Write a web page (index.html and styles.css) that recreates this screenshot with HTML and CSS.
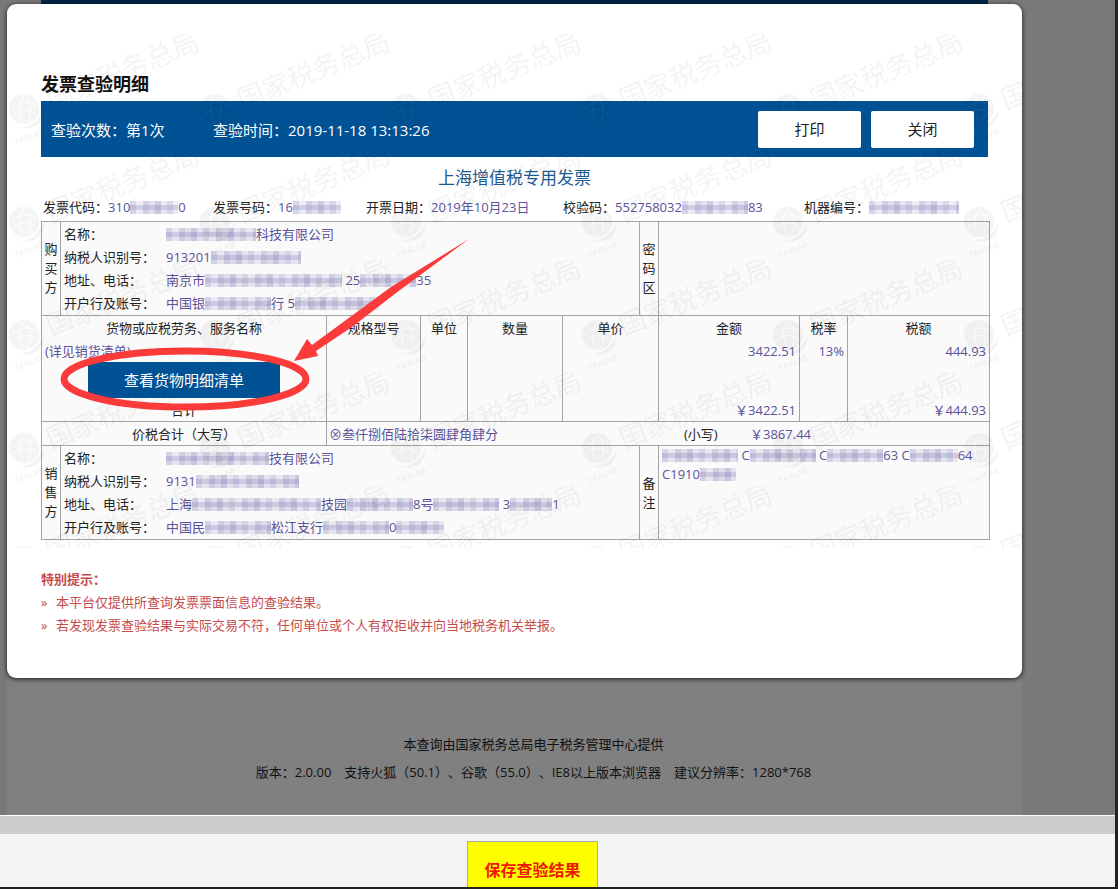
FILE: index.html
```html
<!DOCTYPE html>
<html lang="zh-CN">
<head>
  <meta charset="UTF-8">
  <meta name="viewport" content="width=device-width, initial-scale=1.0">
  <title>发票查验明细</title>
  <link rel="stylesheet" href="styles.css">
</head>
<body>

  <main class="backdrop">
    <div class="banner"></div>

    <section class="dialog">
      <h1>发票查验明细</h1>

      <!-- Check info and actions -->
      <div class="check-bar">
        <span class="check-count">查验次数：第1次</span>
        <span class="check-time">查验时间：2019-11-18 13:13:26</span>
        <button type="button" class="bar-button">打印</button>
        <button type="button" class="bar-button">关闭</button>
      </div>

      <h2>上海增值税专用发票</h2>

      <div class="invoice-info">
        <div>发票代码：<span class="value">310<i class="mosaic m48"></i>0</span></div>
        <div>发票号码：<span class="value">16<i class="mosaic m48"></i></span></div>
        <div>开票日期：<span class="value">2019年10月23日</span></div>
        <div>校验码：<span class="value">552758032<i class="mosaic m66"></i>83</span></div>
        <div>机器编号：<span class="value"><i class="mosaic m90"></i></span></div>
      </div>

      <!-- Invoice -->
      <table class="invoice">
        <colgroup>
          <col class="c-side">
          <col class="c-name">
          <col class="c-spec">
          <col class="c-unit">
          <col class="c-count">
          <col class="c-price">
          <col class="c-side">
          <col class="c-amount">
          <col class="c-rate">
          <col class="c-tax">
        </colgroup>
        <tbody>
          <tr class="party-row">
            <th class="side">购买方</th>
            <td colspan="5">
              <dl class="party">
                <dt>名称：</dt>
                <dd><i class="mosaic m90"></i>科技有限公司</dd>
                <dt>纳税人识别号：</dt>
                <dd>913201<i class="mosaic m90"></i></dd>
                <dt>地址、电话：</dt>
                <dd>南京市<i class="mosaic m137"></i> 25<i class="mosaic m56"></i>35</dd>
                <dt>开户行及账号：</dt>
                <dd>中国银<i class="mosaic m66"></i>行 5<i class="mosaic m84"></i></dd>
              </dl>
            </td>
            <th class="side">密码区</th>
            <td colspan="3"></td>
          </tr>
          <tr class="goods-head">
            <th colspan="2">货物或应税劳务、服务名称</th>
            <th>规格型号</th>
            <th>单位</th>
            <th>数量</th>
            <th colspan="2">单价</th>
            <th>金额</th>
            <th>税率</th>
            <th>税额</th>
          </tr>
          <tr class="goods-item">
            <td colspan="2" class="item-name">(详见销货清单)</td>
            <td></td>
            <td></td>
            <td></td>
            <td colspan="2"></td>
            <td class="number">3422.51</td>
            <td class="number">13%</td>
            <td class="number">444.93</td>
          </tr>
          <tr class="goods-action">
            <td colspan="2"><button type="button" class="list-button">查看货物明细清单</button></td>
            <td></td>
            <td></td>
            <td></td>
            <td colspan="2"></td>
            <td></td>
            <td></td>
            <td></td>
          </tr>
          <tr class="goods-sum">
            <th colspan="2">合计</th>
            <td></td>
            <td></td>
            <td></td>
            <td colspan="2"></td>
            <td class="number">￥3422.51</td>
            <td></td>
            <td class="number">￥444.93</td>
          </tr>
          <tr class="total-row">
            <th colspan="2">价税合计（大写）</th>
            <td colspan="8">
              <div class="total">
                <span class="total-words">⊗叁仟捌佰陆拾柒圆肆角肆分</span>
                <span class="total-label">(小写)</span>
                <span>￥3867.44</span>
              </div>
            </td>
          </tr>
          <tr class="party-row">
            <th class="side">销售方</th>
            <td colspan="5">
              <dl class="party">
                <dt>名称：</dt>
                <dd><i class="mosaic m103"></i>技有限公司</dd>
                <dt>纳税人识别号：</dt>
                <dd>9131<i class="mosaic m103"></i></dd>
                <dt>地址、电话：</dt>
                <dd>上海<i class="mosaic m129"></i>技园<i class="mosaic m66"></i>8号<i class="mosaic m66"></i> 3<i class="mosaic m42"></i>1</dd>
                <dt>开户行及账号：</dt>
                <dd>中国民<i class="mosaic m66"></i>松江支行<i class="mosaic m66"></i>0<i class="mosaic m48"></i></dd>
              </dl>
            </td>
            <th class="side">备注</th>
            <td colspan="3" class="remark">
              <i class="mosaic m76"></i> C<i class="mosaic m66"></i> C<i class="mosaic m56"></i>63 C<i class="mosaic m48"></i>64<br>
              C1910<i class="mosaic m36"></i>
            </td>
          </tr>
        </tbody>
      </table>

      <!-- Notice -->
      <div class="notice">
        <strong>特别提示：</strong>
        <ul>
          <li>本平台仅提供所查询发票票面信息的查验结果。</li>
          <li>若发现发票查验结果与实际交易不符，任何单位或个人有权拒收并向当地税务机关举报。</li>
        </ul>
      </div>

      <!-- Watermark -->
      <svg class="watermark" aria-hidden="true">
        <defs>
          <g id="mark">
            <text class="mark-name" transform="translate(45 76) rotate(-22)">国家税务总局</text>
            <circle cx="18" cy="75" r="15" fill="#000"/>
            <path d="M4 76q14-14 28-4M5 82q13-12 25-2M18 61q-9 14 0 28M19 61q9 12 3 27" fill="none" stroke="#fff" stroke-width="1"/>
            <path d="M5 92q20 7 33-16-2 25-33 16z" fill="#000"/>
            <text class="mark-latin" transform="translate(10 111) rotate(-22)">TAXLAB</text>
          </g>
          <pattern id="marks" x="-1" y="0" width="191" height="113" patternUnits="userSpaceOnUse">
            <use href="#mark"/>
            <use href="#mark" x="-191"/>
          </pattern>
        </defs>
        <rect width="100%" height="100%" fill="url(#marks)"/>
      </svg>

      <!-- Highlight around the list button -->
      <svg class="highlight" width="480" height="420" aria-hidden="true">
        <ellipse cx="178" cy="375" rx="121" ry="28" fill="none" stroke="#fb3a3a" stroke-width="7"/>
        <path d="M287 357l13-22 5 6 34-25 45-33 78-48-73 54-44 34-36 24 2 5z" fill="#fb3a3a"/>
      </svg>
    </section>

    <footer>
      <p>本查询由国家税务总局电子税务管理中心提供</p>
      <p>版本：2.0.00　支持火狐（50.1）、谷歌（55.0）、IE8以上版本浏览器　建议分辨率：1280*768</p>
    </footer>
  </main>

  <div class="divider"></div>

  <div class="save-bar">
    <button type="button" class="save-button">保存查验结果</button>
  </div>

</body>
</html>
```
FILE: styles.css
```css
* {
  box-sizing: border-box;
}

body {
  display: flex;
  flex-direction: column;
  min-height: 100vh;
  margin: 0;
  border-right: 3px solid #222;
  border-bottom: 2px solid #222;
  background-color: #f4f4f4;
  color: #222;
  font-family: "Open Sans", "Noto Sans CJK SC", sans-serif;
  font-size: 13px;
  text-spacing-trim: space-all;
}

h1, h2, p, ul, dl, dd {
  margin: 0;
  padding: 0;
}

button {
  font-family: inherit;
  cursor: pointer;
}

.backdrop {
  padding: 0 93px 0 7px;
  background-color: #797979;
}

.banner {
  height: 4px;
  margin: 0 34px;
  background-color: #012649;
}

.dialog {
  position: relative;
  padding: 66px 34px 41px;
  background-color: white;
  border-radius: 9px;
  box-shadow: 0 1px 5px rgba(0, 0, 0, 0.8);
}

h1 {
  margin-bottom: 3px;
  color: #111;
  font-size: 18px;
  line-height: 28px;
}

.check-bar {
  display: flex;
  align-items: center;
  gap: 10px;
  height: 56px;
  padding: 0 14px 0 10px;
  background-color: #005295;
  color: white;
  font-size: 15px;
}

.check-count {
  width: 152px;
}

.check-time {
  flex: 1;
}

.bar-button {
  position: relative;
  z-index: 2;
  width: 103px;
  height: 37px;
  padding: 0 0 2px;
  border: none;
  border-radius: 2px;
  background-color: white;
  color: #222;
  font-size: 15px;
}

h2 {
  margin-top: 5px;
  color: #1d5b8f;
  font-size: 17px;
  font-weight: normal;
  line-height: 32px;
  text-align: center;
}

.invoice-info {
  display: grid;
  grid-template-columns: 170fr 153fr 197fr 241fr 184fr;
  padding-left: 2px;
  line-height: 27px;
  white-space: nowrap;
}

.value, .party dd, .item-name, .number, .total, .remark {
  color: #5b529b;
}

/* Blurred out digits */
.mosaic {
  display: inline-block;
  height: 13px;
  vertical-align: -2px;
  background-image:
    repeating-linear-gradient(90deg, rgba(90, 80, 160, 0.18) 0 6px, rgba(90, 80, 160, 0.05) 6px 13px, rgba(90, 80, 160, 0.22) 13px 19px, rgba(90, 80, 160, 0.12) 19px 25px, rgba(90, 80, 160, 0.26) 25px 31px, rgba(90, 80, 160, 0.08) 31px 37px),
    linear-gradient(rgba(90, 80, 160, 0.06) 0 4px, rgba(90, 80, 160, 0.24) 4px 9px, rgba(90, 80, 160, 0.08) 9px);
}

.m36 { width: 36px; }
.m42 { width: 42px; }
.m48 { width: 48px; }
.m56 { width: 56px; }
.m66 { width: 66px; }
.m76 { width: 76px; }
.m84 { width: 84px; }
.m90 { width: 90px; }
.m103 { width: 103px; }
.m129 { width: 129px; }
.m137 { width: 137px; }

/* Invoice table */
.invoice {
  width: 100%;
  border-collapse: collapse;
  table-layout: fixed;
  background-color: #fafafa;
}

.c-side { width: 19px; }
.c-name { width: 266px; }
.c-spec { width: 94px; }
.c-unit { width: 47px; }
.c-count { width: 95px; }
.c-price { width: 77px; }
.c-amount { width: 141px; }
.c-rate { width: 48px; }
.c-tax { width: 142px; }

.invoice th, .invoice td {
  padding: 0;
  border: 1px solid #a5a5a5;
  font-weight: normal;
}

.goods-head th, .goods-item td, .goods-action td {
  border-bottom: none;
}

.goods-item td, .goods-action td, .goods-sum th, .goods-sum td {
  border-top: none;
}

.invoice .side {
  padding: 0 2px;
  line-height: 19px;
  word-break: break-all;
}

.party-row {
  height: 94px;
}

.party {
  display: grid;
  grid-template-columns: 102px 1fr;
  padding-left: 3px;
  line-height: 23px;
  white-space: nowrap;
}

.goods-head, .goods-sum, .total-row {
  height: 24px;
}

.goods-item {
  height: 22px;
}

.goods-action {
  height: 36px;
}

.goods-action td {
  text-align: center;
}

.list-button {
  display: block;
  width: 192px;
  height: 36px;
  margin: 0 auto 0 46px;
  border: none;
  background-color: #005295;
  color: white;
  font-size: 15px;
}

.invoice .item-name {
  padding-left: 3px;
}

.invoice .number {
  padding-right: 3px;
  text-align: right;
}

.total {
  display: flex;
  padding-left: 2px;
}

.total-words {
  width: 355px;
}

.total-label {
  width: 66px;
  color: #222;
}

.invoice .remark {
  padding-left: 3px;
  line-height: 19px;
  vertical-align: top;
}

/* Notice */
.notice {
  margin-top: 28px;
  color: #c64b4b;
  line-height: 23px;
}

.notice ul {
  list-style: none;
}

.notice li {
  display: flex;
}

.notice li::before {
  content: "»";
  width: 15px;
}

/* Overlays */
.watermark, .highlight {
  position: absolute;
  top: 0;
  left: 0;
  pointer-events: none;
}

.watermark {
  top: 30px;
  width: 100%;
  height: 514px;
  opacity: 0.04;
}

.mark-name {
  font-size: 27px;
}

.mark-latin {
  font-size: 8px;
  font-weight: bold;
}

.highlight {
  z-index: 3;
}

footer {
  padding: 52px 0 29px 38px;
  background-color: #808080;
  color: #111;
  line-height: 28px;
  text-align: center;
}

/* Bottom bar */
.divider {
  height: 19px;
  border-top: 1px solid white;
  background-color: #ccc;
}

.save-bar {
  display: flex;
  flex: 1;
  justify-content: center;
  padding: 7px 50px 0 0;
}

.save-button {
  width: 131px;
  padding: 8px 0 0;
  border: 1px solid #aaa;
  border-bottom: none;
  background-color: #ff0;
  color: #f01800;
  font-size: 16px;
  font-weight: bold;
}
```
